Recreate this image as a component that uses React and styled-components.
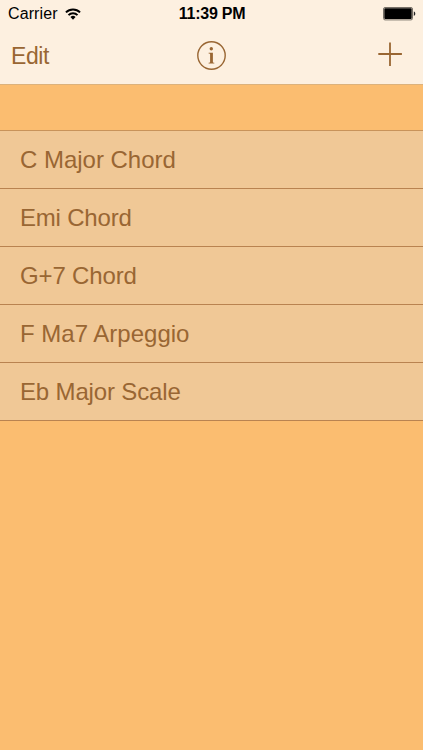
import React from 'react';
import styled, { createGlobalStyle } from 'styled-components';

const GlobalStyle = createGlobalStyle`
    body {
        margin: 0;
        background: #fbbd70;
        font-family: "Liberation Sans", Arial, sans-serif;
    }
`;

const Screen = styled.div`
    display: flex;
    flex-direction: column;
    height: 750px;
    overflow: hidden;
    background: #fbbd70;
`;

const Header = styled.header`
    box-sizing: border-box;
    height: 85px;
    background: #fdf0e0;
    border-bottom: 1px solid #dcb27c;
`;

const StatusBar = styled.div`
    display: grid;
    grid-template-columns: 1fr auto 1fr;
    align-items: center;
    height: 28px;
    padding: 0 7px 0 8px;
    box-sizing: border-box;
    color: #000;
    font-size: 16px;
`;

const Carrier = styled.div`
    display: flex;
    align-items: center;
    gap: 7px;
    letter-spacing: 0.1px;
`;

const Time = styled.div`
    font-weight: bold;
    letter-spacing: -0.25px;
`;

const BatteryIcon = styled.svg`
    justify-self: end;
`;

const NavBar = styled.nav`
    display: grid;
    grid-template-columns: 1fr auto 1fr;
    align-items: center;
    height: 54px;
    padding: 0 20px 0 11px;
    color: #996633;
`;

const NavButton = styled.button`
    display: flex;
    justify-self: ${props => props.$side};
    margin: 0;
    padding: 0;
    border: 0;
    background: none;
    color: inherit;
    font: 23px "Liberation Sans", Arial, sans-serif;
    letter-spacing: -0.4px;
`;

const EditButton = styled(NavButton)`
    padding-top: 2px;
`;

const InfoButton = styled(NavButton)`
    margin: 1px 0 0 9px;
`;

const AddButton = styled(NavButton)`
    padding-bottom: 1px;
`;

const List = styled.ul`
    margin: 45px 0 0;
    padding: 0;
    list-style: none;
    border-top: 1px solid #c8935a;
`;

const Row = styled.li`
    display: flex;
    align-items: center;
    box-sizing: border-box;
    height: 58px;
    padding-left: 20px;
    border-bottom: 1px solid #b98350;
    background: #f0c896;
    color: #996633;
    font-size: 24px;
    letter-spacing: ${props => props.$tracking}px;
`;

const items = [
    { name: 'C Major Chord', tracking: -0.02 },
    { name: 'Emi Chord', tracking: -0.2 },
    { name: 'G+7 Chord', tracking: -0.15 },
    { name: 'F Ma7 Arpeggio', tracking: 0 },
    { name: 'Eb Major Scale', tracking: -0.15 }
];

function WifiIcon() {
    return (
        <svg width="16" height="12" viewBox="0 0 17 12" fill="none" stroke="#000" strokeWidth="2.1">
            <path d="M1 4.3a10.6 10.6 0 0 1 15 0M3.7 7.2a6.8 6.8 0 0 1 9.6 0" />
            <path d="M8.5 12L5.8 9.3a3.8 3.8 0 0 1 5.4 0z" fill="#000" stroke="none" />
        </svg>
    );
}

function InfoIcon() {
    return (
        <svg width="29" height="29" viewBox="0 0 29 29" fill="currentColor">
            <circle cx="14.5" cy="14.5" r="13.7" fill="none" stroke="currentColor" strokeWidth="1.4" />
            <circle cx="14.3" cy="7.7" r="1.7" />
            <path d="M11.6 11.8h4.3v9.2c0 .5.4.7 1.4.8v.8h-5.7v-.8c1-.1 1.5-.3 1.5-.8v-7.4c0-.7-.5-.9-1.5-1z" />
        </svg>
    );
}

function App() {
    return (
        <Screen>
            <GlobalStyle />
            <Header>
                <StatusBar>
                    <Carrier>
                        <span>Carrier</span>
                        <WifiIcon />
                    </Carrier>
                    <Time>11:39 PM</Time>
                    <BatteryIcon width="33" height="14" viewBox="0 0 33 14">
                        <rect x="0.5" y="0.5" width="29" height="12.4" rx="1.5" fill="none" stroke="#777067" />
                        <rect x="1.3" y="1.3" width="27.4" height="10.8" rx="0.8" fill="#000" />
                        <path d="M30.8 4.6c2 .5 2 3.9 0 4.4z" fill="#222" />
                    </BatteryIcon>
                </StatusBar>
                <NavBar>
                    <EditButton $side="start">Edit</EditButton>
                    <InfoButton $side="center" aria-label="Info">
                        <InfoIcon />
                    </InfoButton>
                    <AddButton $side="end" aria-label="Add">
                        <svg width="25" height="25" viewBox="0 0 25 25" stroke="currentColor" strokeWidth="1.8">
                            <path d="M12 .5v23.5M.3 12h23.6" />
                        </svg>
                    </AddButton>
                </NavBar>
            </Header>
            <List>
                {items.map(item => <Row key={item.name} $tracking={item.tracking}>{item.name}</Row>)}
            </List>
        </Screen>
    );
}

export default App;
